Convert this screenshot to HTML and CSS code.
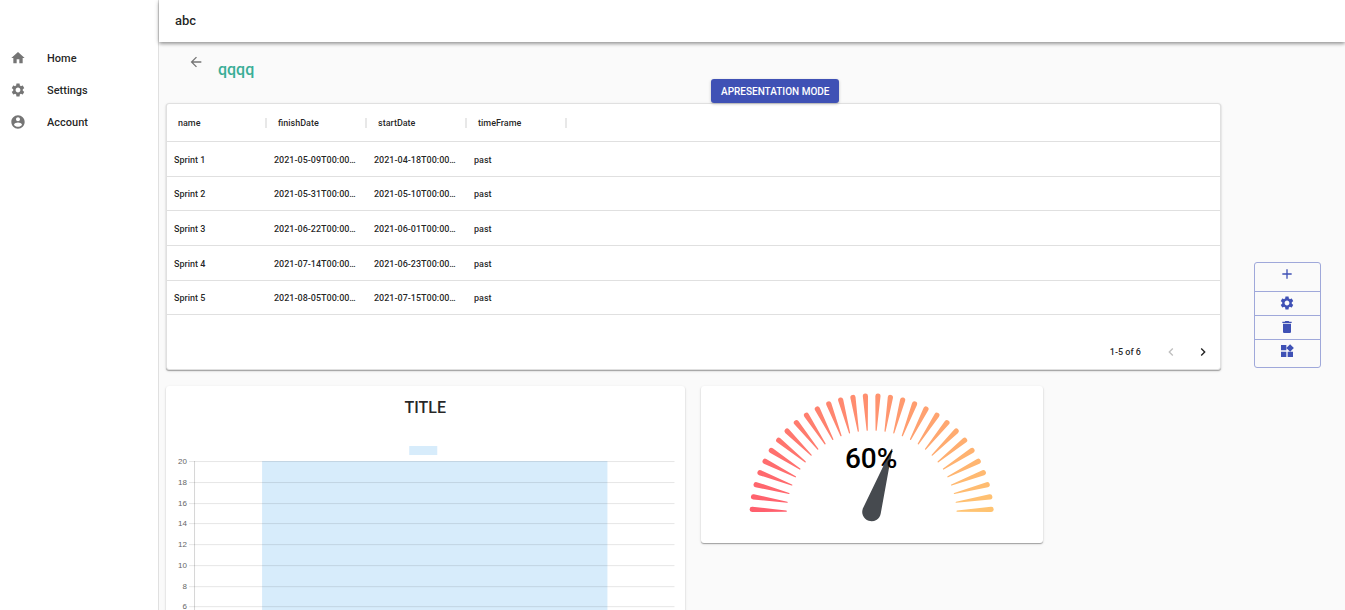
FILE: index.html
```html
<!DOCTYPE html>
<html lang="en">
<head>
<meta charset="utf-8">
<title>abc</title>
<link rel="stylesheet" href="styles.css">
</head>
<body>
<div class="app">
  <nav class="sidebar">
    <a class="nav-link" href="#home">
      <svg class="icon" viewBox="0 0 24 24"><path d="M10 20v-6h4v6h5v-8h3L12 3 2 12h3v8z"/></svg>
      Home
    </a>
    <a class="nav-link" href="#settings">
      <svg class="icon" viewBox="0 0 24 24"><path d="M19.14 12.94c.04-.3.06-.61.06-.94 0-.32-.02-.64-.07-.94l2.03-1.58c.18-.14.23-.41.12-.61l-1.92-3.32c-.12-.22-.37-.29-.59-.22l-2.39.96c-.5-.38-1.03-.7-1.62-.94l-.36-2.54c-.04-.24-.24-.41-.48-.41h-3.84c-.24 0-.43.17-.47.41l-.36 2.54c-.59.24-1.13.57-1.62.94l-2.39-.96c-.22-.08-.47 0-.59.22L2.74 8.87c-.12.21-.08.47.12.61l2.03 1.58c-.05.3-.09.63-.09.94s.02.64.07.94l-2.03 1.58c-.18.14-.23.41-.12.61l1.92 3.32c.12.22.37.29.59.22l2.39-.96c.5.38 1.03.7 1.62.94l.36 2.54c.05.24.24.41.48.41h3.84c.24 0 .44-.17.47-.41l.36-2.54c.59-.24 1.13-.56 1.62-.94l2.39.96c.22.08.47 0 .59-.22l1.92-3.32c.12-.22.07-.47-.12-.61l-2.01-1.58zM12 15.6c-1.98 0-3.6-1.62-3.6-3.6s1.62-3.6 3.6-3.6 3.6 1.62 3.6 3.6-1.62 3.6-3.6 3.6z"/></svg>
      Settings
    </a>
    <a class="nav-link" href="#account">
      <svg class="icon" viewBox="0 0 24 24"><path d="M12 2C6.48 2 2 6.48 2 12s4.48 10 10 10 10-4.480 10-10S17.520 2 12 2zm0 3c1.660 0 3 1.340 3 3s-1.340 3-3 3-3-1.340-3-3 1.340-3 3-3zm0 14.200c-2.500 0-4.710-1.280-6-3.220.030-1.990 4-3.080 6-3.080 1.990 0 5.970 1.090 6 3.080-1.290 1.940-3.500 3.220-6 3.220z"/></svg>
      Account
    </a>
  </nav>

  <div class="page">
    <header class="topbar">abc</header>
    <main class="content">
      <div class="heading">
        <div class="heading-title">
          <button class="back" type="button" aria-label="Back">
            <svg class="icon" viewBox="0 0 24 24"><path d="M20 11H7.830l5.590-5.590L12 4l-8 8 8 8 1.410-1.410L7.830 13H20v-2z"/></svg>
          </button>
          <h1 class="title">qqqq</h1>
        </div>
        <button class="mode" type="button">APRESENTATION MODE</button>
      </div>

      <div class="workspace">
        <div class="board">
          <section class="card table-card">
            <table class="grid">
              <colgroup><col class="col"><col class="col"><col class="col"><col class="col"><col></colgroup>
              <thead>
                <tr><th>name</th><th>finishDate</th><th>startDate</th><th>timeFrame</th><td></td></tr>
              </thead>
              <tbody>
                <tr><td>Sprint 1</td><td>2021-05-09T00:00:00Z</td><td>2021-04-18T00:00:00Z</td><td>past</td><td></td></tr>
                <tr><td>Sprint 2</td><td>2021-05-31T00:00:00Z</td><td>2021-05-10T00:00:00Z</td><td>past</td><td></td></tr>
                <tr><td>Sprint 3</td><td>2021-06-22T00:00:00Z</td><td>2021-06-01T00:00:00Z</td><td>past</td><td></td></tr>
                <tr><td>Sprint 4</td><td>2021-07-14T00:00:00Z</td><td>2021-06-23T00:00:00Z</td><td>past</td><td></td></tr>
                <tr><td>Sprint 5</td><td>2021-08-05T00:00:00Z</td><td>2021-07-15T00:00:00Z</td><td>past</td><td></td></tr>
              </tbody>
            </table>
            <div class="pager">
              <span class="pager-text">1-5 of 6</span>
              <button class="pager-button" type="button" aria-label="Previous page" disabled>
                <svg class="icon" viewBox="0 0 24 24"><path d="M15.410 7.410L14 6l-6 6 6 6 1.410-1.410L10.830 12z"/></svg>
              </button>
              <button class="pager-button" type="button" aria-label="Next page">
                <svg class="icon" viewBox="0 0 24 24"><path d="M10 6L8.590 7.410 13.170 12l-4.580 4.590L10 18l6-6z"/></svg>
              </button>
            </div>
          </section>

          <section class="card chart-card">
            <h2 class="chart-title">TITLE</h2>
            <svg class="chart" id="chart" viewBox="0 0 518 260" role="img" aria-label="Bar chart"></svg>
          </section>

          <section class="card gauge-card">
            <svg class="gauge" id="gauge" viewBox="0 0 342 157" role="img" aria-label="60 percent"></svg>
          </section>
        </div>

        <div class="tools">
          <button class="tool" type="button" aria-label="Add">
            <svg class="icon" viewBox="0 0 24 24"><path d="M19 13h-6v6h-2v-6H5v-2h6V5h2v6h6v2z"/></svg>
          </button>
          <button class="tool" type="button" aria-label="Configure">
            <svg class="icon" viewBox="0 0 24 24"><path d="M19.14 12.94c.04-.3.06-.61.06-.94 0-.32-.02-.64-.07-.94l2.03-1.58c.18-.14.23-.41.12-.61l-1.92-3.32c-.12-.22-.37-.29-.59-.22l-2.39.96c-.5-.38-1.03-.7-1.62-.94l-.36-2.54c-.04-.24-.24-.41-.48-.41h-3.84c-.24 0-.43.17-.47.41l-.36 2.54c-.59.24-1.13.57-1.62.94l-2.39-.96c-.22-.08-.47 0-.59.22L2.74 8.87c-.12.21-.08.47.12.61l2.03 1.58c-.05.3-.09.63-.09.94s.02.64.07.94l-2.03 1.58c-.18.14-.23.41-.12.61l1.92 3.32c.12.22.37.29.59.22l2.39-.96c.5.38 1.03.7 1.62.94l.36 2.54c.05.24.24.41.48.41h3.84c.24 0 .44-.17.47-.41l.36-2.54c.59-.24 1.13-.56 1.62-.94l2.39.96c.22.08.47 0 .59-.22l1.92-3.32c.12-.22.07-.47-.12-.61l-2.01-1.58zM12 15.6c-1.98 0-3.6-1.62-3.6-3.6s1.62-3.6 3.6-3.6 3.6 1.62 3.6 3.6-1.62 3.6-3.6 3.6z"/></svg>
          </button>
          <button class="tool" type="button" aria-label="Delete">
            <svg class="icon" viewBox="0 0 24 24"><path d="M6 19c0 1.100.900 2 2 2h8c1.100 0 2-.900 2-2V7H6v12zM19 4h-3.500l-1-1h-5l-1 1H5v2h14V4z"/></svg>
          </button>
          <button class="tool" type="button" aria-label="Widgets">
            <svg class="icon" viewBox="0 0 24 24"><path d="M13 13v8h8v-8h-8zM3 21h8v-8H3v8zM3 3v8h8V3H3zm13.660-1.310L11 7.340 16.660 13l5.660-5.660-5.660-5.650z"/></svg>
          </button>
        </div>
      </div>
    </main>
  </div>
</div>
<script src="charts.js"></script>
</body>
</html>
```
FILE: styles.css
```css
* {
  box-sizing: border-box;
}

body {
  margin: 0;
  background: #fafafa;
  color: rgba(0, 0, 0, 0.87);
  font-family: Roboto, "Liberation Sans", sans-serif;
  font-weight: 500;
}

button {
  margin: 0;
  padding: 0;
  border: 0;
  background: none;
  color: inherit;
  font: inherit;
  cursor: pointer;
}

.icon {
  display: block;
  width: 16px;
  height: 16px;
  fill: currentColor;
}

.app {
  display: flex;
  height: 100vh;
}

.sidebar {
  flex: none;
  width: 159px;
  padding-top: 42px;
  border-right: 1px solid #e0e0e0;
  background: #fff;
}

.nav-link {
  display: flex;
  align-items: center;
  gap: 21px;
  height: 32px;
  padding-left: 10px;
  color: rgba(0, 0, 0, 0.87);
  font-size: 11px;
  text-decoration: none;
}

.nav-link .icon {
  fill: #757575;
}

.page {
  display: flex;
  flex: 1;
  flex-direction: column;
  min-width: 0;
}

.topbar {
  z-index: 1;
  flex: none;
  height: 42px;
  padding: 0 16px;
  background: #fff;
  box-shadow: 0 2px 4px -1px rgba(0, 0, 0, 0.2), 0 1px 5px rgba(0, 0, 0, 0.2), 0 2px 3px rgba(0, 0, 0, 0.14);
  font-size: 13px;
  line-height: 41px;
}

.content {
  flex: 1;
  min-height: 0;
  overflow-y: auto;
  scrollbar-width: none;
}

.heading {
  position: relative;
  z-index: 1;
  display: grid;
  grid-template-columns: 552fr 634fr;
  align-items: end;
  justify-items: start;
  height: 61px;
}

.heading-title {
  display: flex;
  align-items: start;
  gap: 14px;
  height: 61px;
  padding: 12px 0 0 29px;
}

.back {
  color: #757575;
}

.title {
  margin: 5px 0 0;
  color: #3aae97;
  font-size: 16px;
  font-weight: 500;
  line-height: 21px;
}

.mode {
  height: 24px;
  padding: 0 10px;
  border-radius: 3px;
  background: #3f51b5;
  box-shadow: 0 1px 3px rgba(0, 0, 0, 0.25);
  color: #fff;
  font-size: 10px;
}

.workspace {
  display: flex;
  align-items: start;
  gap: 33px;
  padding: 0 24px 16px 7px;
}

.board {
  display: grid;
  flex: 1;
  grid-template-columns: 518fr 342fr 162fr;
  align-items: start;
  gap: 16px;
  min-width: 0;
}

.card {
  border-radius: 3px;
  background: #fff;
  box-shadow: 0 1px 1px rgba(0, 0, 0, 0.3), 0 1px 3px rgba(0, 0, 0, 0.12);
}

.table-card {
  grid-column: 1 / -1;
  border: 1px solid #e0e0e0;
}

.grid {
  width: 100%;
  border-collapse: separate;
  border-spacing: 0;
  font-size: 9px;
  table-layout: fixed;
}

.col {
  width: 100px;
}

.grid th,
.grid td {
  height: 35px;
  padding: 1px 9px 0 7px;
  overflow: hidden;
  border-bottom: 1px solid #e0e0e0;
  text-align: left;
  text-overflow: ellipsis;
  white-space: nowrap;
}

.grid tr:nth-child(3n + 2) td {
  height: 34px;
}

.grid th {
  height: 38px;
  padding: 0 11px;
  background: linear-gradient(#e8e8e8, #e8e8e8) right center / 2px 10px no-repeat;
  font-weight: 500;
}

.pager {
  display: flex;
  align-items: center;
  justify-content: flex-end;
  gap: 16px;
  height: 54px;
  padding: 20px 9px 0 0;
  font-size: 9px;
}

.pager-text {
  margin-right: 6px;
}

.pager-button:disabled {
  color: rgba(0, 0, 0, 0.26);
}

.chart-title {
  margin: 0;
  padding-top: 12px;
  font-size: 16px;
  font-weight: 500;
  line-height: 20px;
  text-align: center;
}

.chart,
.gauge {
  display: block;
  width: 100%;
}

.axis-label {
  fill: #666;
  font: 8px "Liberation Sans", sans-serif;
  text-anchor: end;
}

.gauge-value {
  fill: #000;
  font-size: 28px;
  text-anchor: middle;
}

.tools {
  display: flex;
  flex: none;
  flex-direction: column;
  width: 67px;
  margin-top: 159px;
  border: 1px solid #9fa8da;
  border-radius: 3px;
  color: #3f51b5;
}

.tool {
  display: flex;
  justify-content: center;
  padding: 3px 1px 4px 0;
}

.tool + .tool {
  border-top: 1px solid #9fa8da;
}

.tool:first-child {
  padding-bottom: 9px;
}

.tool:last-child {
  padding-bottom: 8px;
}
```
FILE: charts.js
```js
const SVG = "http://www.w3.org/2000/svg";

function add(parent, name, attrs, text) {
  const node = document.createElementNS(SVG, name);
  for (const key in attrs) node.setAttribute(key, attrs[key]);
  if (text !== undefined) node.textContent = text;
  parent.appendChild(node);
  return node;
}

// Bar chart: legend swatch, horizontal rules with labels, one bar.
const chart = document.getElementById("chart");
const top0 = 43.5;
const step = 20.77;
add(chart, "rect", { x: 243, y: 28, width: 28, height: 9, fill: "#d7ecfb" });
add(chart, "rect", { x: 96, y: 43, width: 345, height: 208, fill: "#d7ecfb" });
for (let i = 0; i <= 7; i++) {
  const y = Math.floor(top0 + step * i);
  add(chart, "rect", { x: 23, y: y, width: 485, height: 1, fill: "rgba(0,0,0,0.1)" });
  add(chart, "text", { x: 21, y: y + 3, class: "axis-label" }, 20 - 2 * i);
}
add(chart, "rect", { x: 28, y: 43, width: 1, height: 208, fill: "rgba(0,0,0,0.16)" });

// Gauge: thirty tapered ticks, coloured from red to amber.
const gauge = document.getElementById("gauge");
const from = [255, 95, 109];
const to = [255, 195, 113];
for (let i = 0; i < 30; i++) {
  const t = i / 29;
  const rgb = from.map((c, k) => Math.round(c + (to[k] - c) * t));
  add(gauge, "path", {
    d: "M-85.500 -.600 L-119.500 -2.600 A2.600 2.600 0 0 0 -119.500 2.600 L-85.500 .600 A.600 .600 0 0 0 -85.500 -.600z",
    fill: "rgb(" + rgb + ")",
    transform: "translate(170.500 129.500) rotate(" + (3 + 6 * i) + ")"
  });
}
add(gauge, "path", {
  d: "M-9.200 -1 A9.300 9.300 0 1 0 9.200 -1 L.400 -66 L-.400 -66z",
  fill: "#464a4f",
  transform: "translate(170.500 125.500) rotate(18)"
});
add(gauge, "text", { x: 170, y: 82, class: "gauge-value" }, "60%");
```
